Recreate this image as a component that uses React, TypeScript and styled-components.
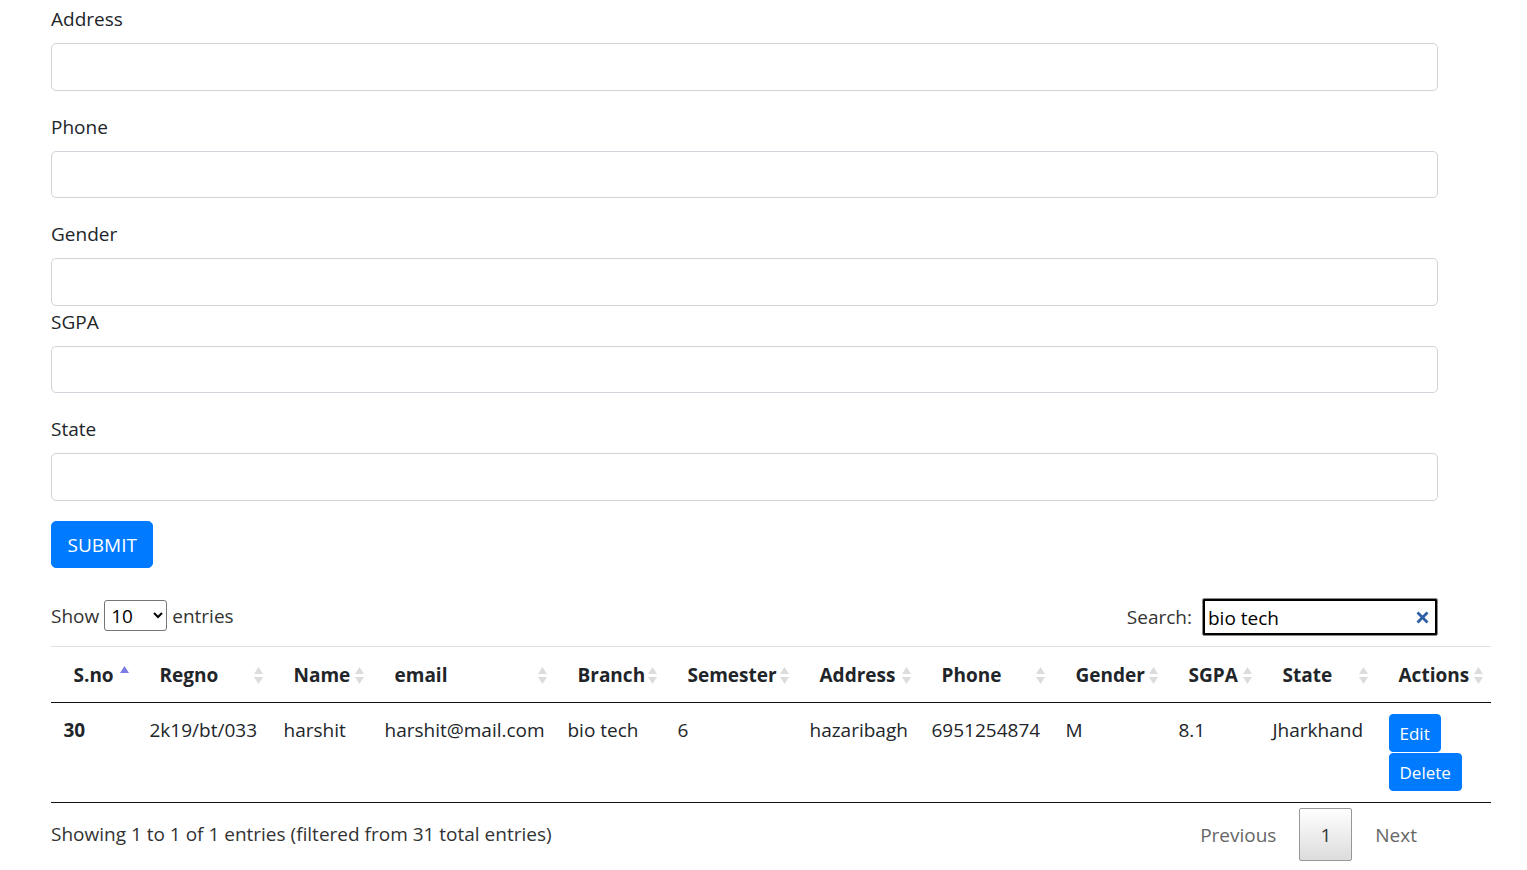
import React from "react";
import styled, { createGlobalStyle } from "styled-components";

const Global = createGlobalStyle`
  html, body { margin: 0; padding: 0; background: #fff; }
  body {
    font-family: "Open Sans", "Noto Sans", sans-serif;
    font-size: 19px;
    line-height: 30px;
    color: #212529;
  }
  * { box-sizing: border-box; }
`;

const Container = styled.div`
  width: 1438px;
  padding: 3px 0 0 51px;
`;

const FormGroup = styled.div<{ $mb?: number }>`
  margin-bottom: ${(p) => (p.$mb ?? 20)}px;
`;

const Label = styled.label`
  display: block;
  padding-top: 1px;
  margin-bottom: 9px;
  line-height: 30px;
`;

const Input = styled.input`
  display: block;
  width: 100%;
  height: 47.5px;
  border: 1px solid #ced4da;
  border-radius: 5px;
  background: #fff;
  font: inherit;
  padding: 7.5px 15px;
`;

const SubmitButton = styled.button`
  font: inherit;
  font-size: 19px;
  line-height: 30px;
  padding: 8.5px 15.5px 6.5px;
  color: #fff;
  background: #007bff;
  border: 1px solid #007bff;
  border-radius: 5px;
`;

const Controls = styled.div`
  margin-top: 30px;
  display: flex;
  justify-content: space-between;
  align-items: center;
  height: 38px;
`;

const LengthLabel = styled.label`
  display: flex;
  align-items: center;
  gap: 5px;
  color: #333;
  margin-top: -2px;
`;

const Select = styled.select`
  width: 63px;
  height: 31px;
  font: inherit;
  font-size: 19px;
  color: #000;
  border: 1px solid #767676;
  border-radius: 3px;
  padding: 0 2px;
  background: #fff;
`;

const FilterLabel = styled.label`
  display: flex;
  align-items: center;
  gap: 10px;
  color: #333;
  margin-top: 1px;
`;

const SearchBox = styled.div`
  position: relative;
  width: 236px;
  height: 38px;
`;

const SearchInput = styled.input`
  width: 100%;
  height: 100%;
  font: inherit;
  font-size: 19px;
  color: #000;
  padding: 2px 30px 0 5px;
  border: 1px solid #8a8a8a;
  border-radius: 2px;
  outline: 2px solid #000;
  outline-offset: -3px;
  background: #fff;
`;

const ClearIcon = styled.svg`
  position: absolute;
  right: 9px;
  top: 13px;
`;

const Table = styled.table`
  margin-top: 10px;
  width: 1440px;
  table-layout: fixed;
  border-collapse: separate;
  border-spacing: 0;
  border-bottom: 1px solid #111;
`;

const Th = styled.th`
  border-top: 1px solid #dee2e6;
  border-bottom: 1px solid #111;
  padding: 13px 8px 12px 22.5px;
  text-align: left;
  font-weight: 700;
  line-height: 30px;
  white-space: nowrap;
`;

const ThInner = styled.div`
  display: flex;
  align-items: center;
  justify-content: space-between;
`;

const Td = styled.td<{ $bold?: boolean }>`
  padding: 11px 12.5px 11px;
  vertical-align: top;
  line-height: 30px;
  white-space: nowrap;
  font-weight: ${(p) => (p.$bold ? 700 : 400)};
`;

const CellText = styled.div`
  padding-top: 1px;
`;

const Actions = styled.div`
  display: flex;
  flex-direction: column;
  align-items: flex-start;
  gap: 1px;
`;

const SmallButton = styled.button`
  font: inherit;
  font-size: 17px;
  line-height: 26px;
  padding: 6px 10px 4px;
  color: #fff;
  background: #007bff;
  border: 1px solid #007bff;
  border-radius: 4px;
`;

const Footer = styled.div`
  display: flex;
  justify-content: space-between;
  align-items: flex-start;
`;

const Info = styled.div`
  padding-top: 16px;
  color: #333;
`;

const Paginate = styled.div`
  display: flex;
  padding-top: 5px;
`;

const PageButton = styled.span<{ $current?: boolean; $disabled?: boolean }>`
  display: inline-block;
  min-width: 30px;
  padding: 11px 20px 10px;
  margin-left: 2px;
  text-align: center;
  line-height: 30px;
  border-radius: 2px;
  border: 1px solid ${(p) => (p.$current ? "#979797" : "transparent")};
  color: ${(p) => (p.$disabled ? "#666" : "#333")};
  background: ${(p) =>
    p.$current ? "linear-gradient(to bottom, #fff 0%, #dcdcdc 100%)" : "transparent"};
`;

const SortIcon = ({ asc }: { asc?: boolean }) => (
  <svg width="9" height="18" viewBox="0 0 9 18" style={{ flexShrink: 0 }}>
    {asc ? (
      <path d="M4.5 0 L9 7 L0 7 Z" fill="#7c7ce6" />
    ) : (
      <>
        <path d="M4.5 1 L9 8 L0 8 Z" fill="#dcdcdc" />
        <path d="M0 11 L9 11 L4.5 18 Z" fill="#dcdcdc" />
      </>
    )}
  </svg>
);

const fields = [
  { label: "Address", mb: 20 },
  { label: "Phone", mb: 20 },
  { label: "Gender", mb: 0 },
  { label: "SGPA", mb: 20 },
  { label: "State", mb: 20 },
];

const columns = [
  { name: "S.no", w: 86 },
  { name: "Regno", w: 134 },
  { name: "Name", w: 101 },
  { name: "email", w: 183 },
  { name: "Branch", w: 110 },
  { name: "Semester", w: 132 },
  { name: "Address", w: 122 },
  { name: "Phone", w: 134 },
  { name: "Gender", w: 113 },
  { name: "SGPA", w: 94 },
  { name: "State", w: 116 },
  { name: "Actions", w: 115 },
];

const row = [
  "2k19/bt/033",
  "harshit",
  "harshit@mail.com",
  "bio tech",
  "6",
  "hazaribagh",
  "6951254874",
  "M",
  "8.1",
  "Jharkhand",
];

export default function App() {
  return (
    <>
      <Global />
      <Container>
        {fields.map((f) => (
          <FormGroup key={f.label} $mb={f.mb}>
            <Label>{f.label}</Label>
            <Input type="text" />
          </FormGroup>
        ))}
        <SubmitButton>SUBMIT</SubmitButton>

        <Controls>
          <LengthLabel>
            Show
            <Select defaultValue="10">
              <option value="10">10</option>
              <option value="25">25</option>
              <option value="50">50</option>
              <option value="100">100</option>
            </Select>
            entries
          </LengthLabel>
          <FilterLabel>
            Search:
            <SearchBox>
              <SearchInput type="text" defaultValue="bio tech" />
              <ClearIcon width="13" height="13" viewBox="0 0 13 13">
                <path d="M1.5 1.5 L11.5 11.5 M11.5 1.5 L1.5 11.5" stroke="#2d5ea6" strokeWidth="2.8" />
              </ClearIcon>
            </SearchBox>
          </FilterLabel>
        </Controls>

        <Table>
          <colgroup>
            {columns.map((c) => (
              <col key={c.name} style={{ width: c.w }} />
            ))}
          </colgroup>
          <thead>
            <tr>
              {columns.map((c, i) => (
                <Th key={c.name}>
                  <ThInner>
                    <span>{c.name}</span>
                    <SortIcon asc={i === 0} />
                  </ThInner>
                </Th>
              ))}
            </tr>
          </thead>
          <tbody>
            <tr>
              <Td $bold>
                <CellText>30</CellText>
              </Td>
              {row.map((v, i) => (
                <Td key={i}>
                  <CellText>{v}</CellText>
                </Td>
              ))}
              <Td>
                <Actions>
                  <SmallButton>Edit</SmallButton>
                  <SmallButton>Delete</SmallButton>
                </Actions>
              </Td>
            </tr>
          </tbody>
        </Table>

        <Footer>
          <Info>Showing 1 to 1 of 1 entries (filtered from 31 total entries)</Info>
          <Paginate>
            <PageButton $disabled>Previous</PageButton>
            <PageButton $current>1</PageButton>
            <PageButton $disabled>Next</PageButton>
          </Paginate>
        </Footer>
      </Container>
    </>
  );
}
